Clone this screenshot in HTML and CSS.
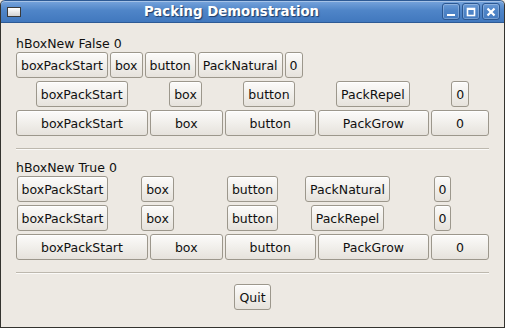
FILE: index.html
```html
<!DOCTYPE html>
<html lang="en">
<head>
  <meta charset="UTF-8" />
  <title>Packing Demonstration</title>
  <link rel="stylesheet" href="styles.css">
</head>
<body>

  <div class="window">
    <div class="titlebar">
      <div class="app-icon"></div>
      <div class="title">Packing Demonstration</div>
      <div class="wm-buttons">
        <div class="wm-btn">
          <svg width="10" height="10" viewBox="0 0 10 10"><rect x="1" y="7" width="8" height="2" fill="#fff"/></svg>
        </div>
        <div class="wm-btn">
          <svg width="10" height="10" viewBox="0 0 10 10"><rect x="1.5" y="1.5" width="7" height="7" fill="none" stroke="#fff" stroke-width="1.6"/><rect x="1" y="1" width="8" height="2" fill="#fff"/></svg>
        </div>
        <div class="wm-btn">
          <svg width="10" height="10" viewBox="0 0 10 10"><path d="M1.5 1.5 L8.5 8.5 M8.5 1.5 L1.5 8.5" stroke="#fff" stroke-width="2.2"/></svg>
        </div>
      </div>
    </div>

    <div class="content">
      <!-- non-homogeneous box -->
      <div class="label">hBoxNew False 0</div>
      <div class="row natural">
        <button class="btn">boxPackStart</button>
        <button class="btn">box</button>
        <button class="btn">button</button>
        <button class="btn">PackNatural</button>
        <button class="btn">0</button>
      </div>
      <div class="row repel">
        <div class="cell"><button class="btn">boxPackStart</button></div>
        <div class="cell"><button class="btn">box</button></div>
        <div class="cell"><button class="btn">button</button></div>
        <div class="cell"><button class="btn">PackRepel</button></div>
        <div class="cell"><button class="btn">0</button></div>
      </div>
      <div class="row grow">
        <button class="btn">boxPackStart</button>
        <button class="btn">box</button>
        <button class="btn">button</button>
        <button class="btn">PackGrow</button>
        <button class="btn">0</button>
      </div>

      <hr class="sep" />

      <!-- homogeneous box -->
      <div class="label">hBoxNew True 0</div>
      <div class="row homo">
        <button class="btn">boxPackStart</button>
        <button class="btn">box</button>
        <button class="btn">button</button>
        <button class="btn">PackNatural</button>
        <button class="btn">0</button>
      </div>
      <div class="row homo">
        <button class="btn">boxPackStart</button>
        <button class="btn">box</button>
        <button class="btn">button</button>
        <button class="btn">PackRepel</button>
        <button class="btn">0</button>
      </div>
      <div class="row grow">
        <button class="btn">boxPackStart</button>
        <button class="btn">box</button>
        <button class="btn">button</button>
        <button class="btn">PackGrow</button>
        <button class="btn">0</button>
      </div>

      <hr class="sep" />

      <div class="quit-row">
        <button class="btn">Quit</button>
      </div>
    </div>
  </div>

</body>
</html>
```

FILE: styles.css
```css
body {
  margin: 0;
  padding: 0;
  font-family: "DejaVu Sans", Verdana, sans-serif;
  background-color: #ede9e3;
}

.window {
  width: 505px;
  height: 328px;
  box-sizing: border-box;
  border: 1px solid #34332f;
  border-top: none;
  border-radius: 5px 5px 0 0;
  background-color: #ede9e3;
  overflow: hidden;
}

.titlebar {
  height: 23px;
  box-sizing: border-box;
  display: flex;
  align-items: center;
  padding: 0 4px 0 6px;
  border: 1px solid #2d5a95;
  border-radius: 5px 5px 0 0;
  margin: 0 -1px;
  background: linear-gradient(#77a4dc, #4f85c8 45%, #4178be);
  box-shadow: inset 0 1px 0 rgba(255, 255, 255, 0.35);
}

.app-icon {
  width: 12px;
  height: 8px;
  border: 1px solid #3a3a3a;
  background: linear-gradient(#ffffff, #d3d3d3);
}

.title {
  flex-grow: 1;
  text-align: center;
  color: white;
  font-size: 13.3px;
  font-weight: bold;
  text-shadow: 1px 1px 1px #1f3c66;
}

.wm-buttons {
  display: flex;
  gap: 2px;
}

.wm-btn {
  width: 18px;
  height: 17px;
  box-sizing: border-box;
  border: 1px solid #2b5791;
  border-radius: 3px;
  box-shadow: inset 0 0 0 1px rgba(255, 255, 255, 0.25);
  display: flex;
  align-items: center;
  justify-content: center;
}

.content {
  padding: 13px 14px 0 14px;
  font-size: 12.5px;
  color: #101010;
}

.label {
  height: 16px;
  line-height: 16px;
  padding-left: 1px;
}

.row {
  display: flex;
  height: 26px;
  margin-bottom: 3px;
}

.btn {
  height: 26px;
  margin: 0 1px;
  padding: 0 4px;
  box-sizing: border-box;
  font-family: inherit;
  font-size: 12.5px;
  color: #101010;
  white-space: nowrap;
  border: 1px solid #9c978c;
  border-radius: 3px;
  background: linear-gradient(#fcfbfa, #f1efeb 50%, #e6e2dc);
  box-shadow: inset 0 1px 0 #ffffff;
}

.row.grow .btn {
  flex: 1 1 auto;
}

.row.repel .cell {
  flex: 1 1 auto;
  display: flex;
  justify-content: center;
}

.row.homo {
  display: grid;
  grid-template-columns: repeat(5, 1fr);
  justify-items: center;
}

.sep {
  margin: 12px 1px 10px 1px;
  border: none;
  border-top: 1px solid #bdb8ae;
  border-bottom: 1px solid #fbfaf8;
}

.quit-row {
  display: flex;
  justify-content: center;
}
```
